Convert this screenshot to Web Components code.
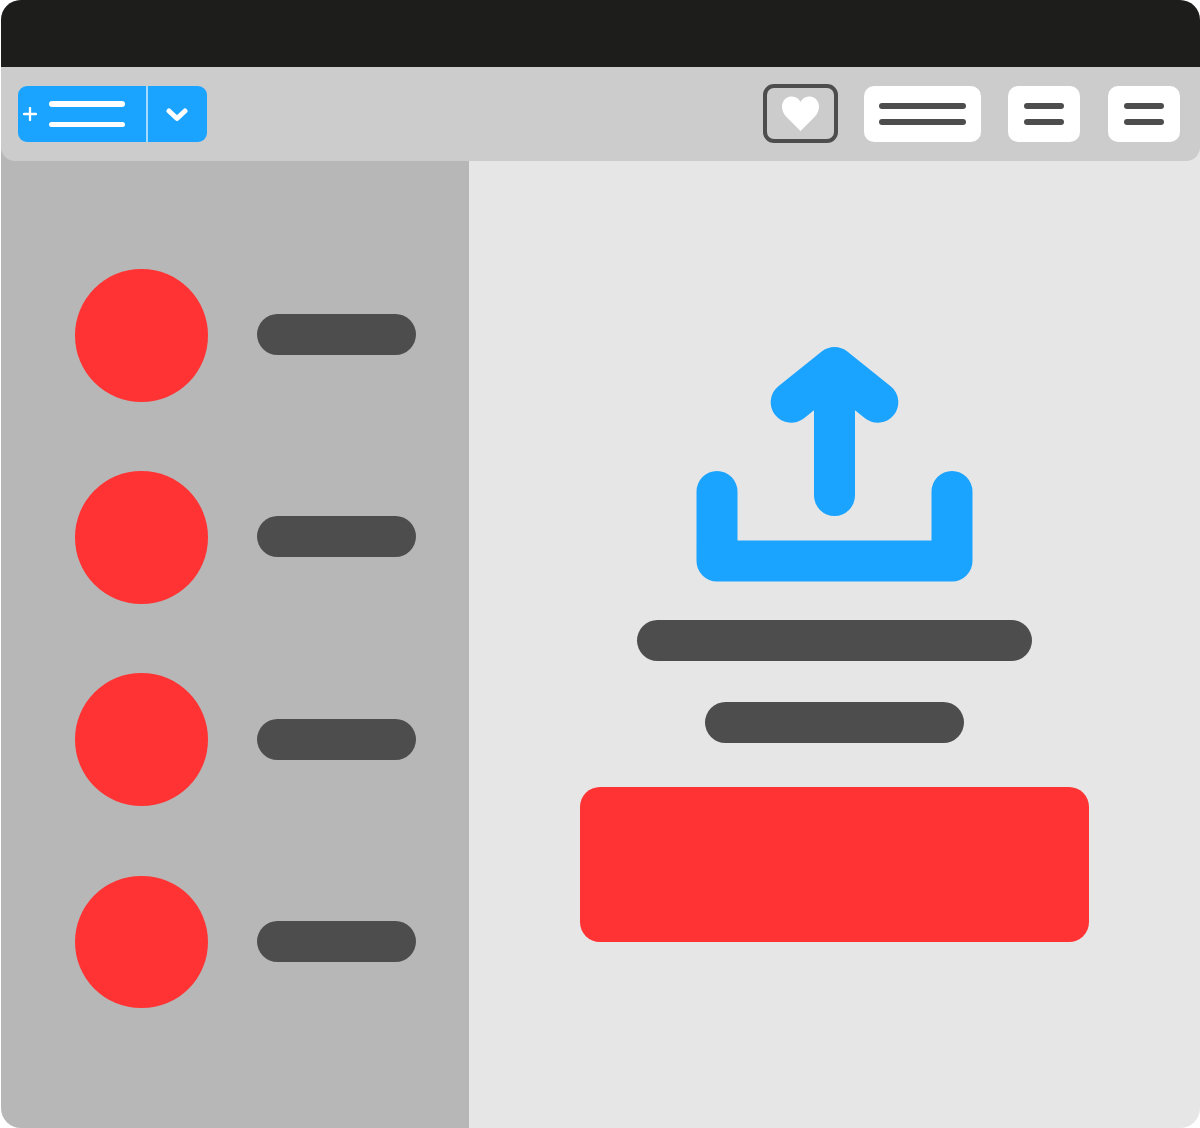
<!DOCTYPE html>
<html lang="en"><head><meta charset="utf-8"><title>Upload window</title>
<style>html,body{margin:0;padding:0;background:#fff;overflow:hidden}</style></head>
<body>
<app-window>
  <title-bar slot="title"></title-bar>
  <tool-bar slot="tools">
    <split-button></split-button>
    <span style="flex:1"></span>
    <heart-button></heart-button>
    <line-button style="--w:116.4px;--line:87px;margin-left:26.3px"></line-button>
    <line-button style="--w:72px;--line:40px;margin-left:27.6px"></line-button>
    <line-button style="--w:71.4px;--line:40px;margin-left:28px"></line-button>
  </tool-bar>
  <side-panel slot="side">
    <side-row></side-row><side-row></side-row><side-row></side-row><side-row></side-row>
  </side-panel>
  <drop-zone slot="main"></drop-zone>
</app-window>
<script>
function def(name, html){
  customElements.define(name, class extends HTMLElement{
    constructor(){super();this.attachShadow({mode:'open'}).innerHTML=html;}
  });
}
def('app-window',`<style>
:host{display:grid;grid-template-columns:469px 1fr;grid-template-rows:67px 94px 967px;width:1199px;height:1128px;margin-left:1px;border-radius:20px;overflow:hidden;background:linear-gradient(90deg,#b7b7b7 468px,#e6e6e6 468px)}
.t{grid-column:1/3}
</style>
<div class="t"><slot name="title"></slot></div>
<div class="t"><slot name="tools"></slot></div>
<slot name="side"></slot><slot name="main"></slot>`);
def('title-bar',`<style>:host{display:block;height:67px;background:#1d1d1b}</style>`);
def('tool-bar',`<style>:host{display:flex;align-items:center;box-sizing:border-box;height:94px;padding:0 20.3px 0 17px;background:#ccc;border-radius:0 0 14px 14px}</style><slot></slot>`);
def('split-button',`<style>
:host{display:flex;width:189px;height:56px;border-radius:9px;overflow:hidden;background:#1aa3ff}
.l{flex:none;width:129.5px;display:flex;align-items:center;box-sizing:border-box;padding-left:4.5px;border-right:2px solid #a3daff}
.ls{display:flex;flex-direction:column;gap:15px;margin-left:12.5px}
.ls i{display:block;width:76px;height:5.3px;border-radius:3px;background:#fff}
.r{flex:1;display:flex;align-items:center;justify-content:center}
svg{display:block}
</style>
<div class="l"><svg width="14" height="14" viewBox="0 0 14 14" fill="none" stroke="#fff" stroke-width="2.3" stroke-linecap="round"><path d="M7 1v12M1 7h12"/></svg>
<div class="ls"><i></i><i></i></div></div>
<div class="r"><svg width="22" height="15" viewBox="0 0 22 15" fill="none" stroke="#fff" stroke-width="5" stroke-linecap="round" stroke-linejoin="round"><path d="M3 4l8 7.5L19 4"/></svg></div>`);
def('heart-button',`<style>
:host{display:flex;align-items:center;justify-content:center;box-sizing:border-box;width:75px;height:59px;margin-bottom:1px;border:4px solid #4d4d4d;border-radius:11px}
svg{display:block}
</style><svg width="38" height="35" viewBox="0 0 38 35" fill="#fff"><path d="M18.5 35 4 20.5C-3 13-.5 1 9.500.5c4-.2 7.300 2 9 5.500 1.700-3.500 5-5.700 9-5.500 10 .5 12.500 12.500 5.500 20Z"/></svg>`);
def('line-button',`<style>
:host{display:flex;flex-direction:column;align-items:center;justify-content:center;gap:10px;width:var(--w);height:56px;border-radius:10px;background:#fff}
i{display:block;width:var(--line);height:6px;border-radius:3px;background:#4d4d4d}
</style><i></i><i></i>`);
def('side-panel',`<style>:host{display:flex;flex-direction:column;gap:69.7px;box-sizing:border-box;padding:108px 0 0 74px}</style><slot></slot>`);
def('side-row',`<style>
:host{display:flex;align-items:center;gap:49.5px;height:132.5px}
.c{width:132.5px;height:132.5px;border-radius:50%;background:#f33}
.p{width:159px;height:41px;margin-bottom:1px;border-radius:20.5px;background:#4d4d4d}
</style><div class="c"></div><div class="p"></div>`);
def('drop-zone',`<style>
:host{display:flex;flex-direction:column;align-items:center;box-sizing:border-box;padding:185px 1px 0 0}
svg{display:block}
.p{height:41px;border-radius:20.5px;background:#4d4d4d}
.a{width:395px;margin-top:38px}.b{width:259px;margin-top:41px}
.btn{width:509.5px;height:155px;margin-top:44px;border-radius:20px;background:#f33}
</style>
<svg width="277" height="236" viewBox="696 346 277 236" fill="none" stroke="#1aa3ff" stroke-width="41" stroke-linecap="round" stroke-linejoin="round"><path d="M717 491.5V561H952V491.5"/><path d="M834.5 495.5V372"/><path d="M791.2 402.2 834.5 367.5 877.8 402.2"/></svg>
<div class="p a"></div><div class="p b"></div><div class="btn"></div>`);
</script>
</body></html>
